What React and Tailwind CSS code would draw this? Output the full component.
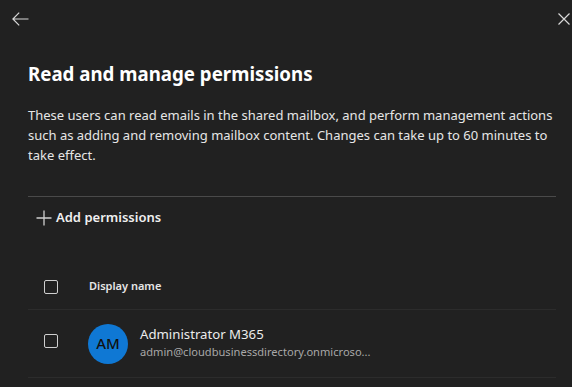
const FONT = { fontFamily: '"Noto Sans", "Open Sans", sans-serif' }

function BackArrow() {
  return (
    <svg width="17" height="14" viewBox="0 0 17 14" fill="none" stroke="currentColor" strokeWidth="1.2">
      <path d="M16.5 7H1M7.2 0.6L0.9 7l6.3 6.4" />
    </svg>
  )
}

function CloseX() {
  return (
    <svg width="12" height="12" viewBox="0 0 12 12" fill="none" stroke="currentColor" strokeWidth="1.2">
      <path d="M0.5 0.5l11 11M11.5 0.5l-11 11" />
    </svg>
  )
}

function PlusIcon() {
  return (
    <svg width="16" height="16" viewBox="0 0 16 16" fill="none" stroke="currentColor" strokeWidth="1.3">
      <path d="M8 0.5v15M0.5 8h15" />
    </svg>
  )
}

export default function App() {
  return (
    <div className="w-[572px] h-[387px] overflow-hidden bg-[#212121] text-white" style={FONT}>
      <div className="flex items-start justify-between h-[36px]">
        <button className="ml-[12px] mt-[12px] text-[#d8d8d8]">
          <BackArrow />
        </button>
        <button className="mr-[2px] mt-[13px] text-[#d8d8d8]">
          <CloseX />
        </button>
      </div>

      <div className="pl-[28px] pr-[16px]">
        <h1 className="mt-[25px] text-[18.7px] leading-[26px] font-bold text-white">Read and manage permissions</h1>
        <p className="mt-[18px] text-[13px] leading-[20px] text-[#e6e6e6]">
          These users can read emails in the shared mailbox, and perform management actions such as adding and removing mailbox content. Changes can take up to 60 minutes to take effect.
        </p>
        <div className="mt-[31px] h-px bg-[#4a4a4a]" />

        <button className="mt-[10px] flex items-center gap-[4px] pl-[8px] h-[22px] text-[13px] font-semibold text-[#f0f0f0]">
          <span className="text-[#cfcfcf]"><PlusIcon /></span>
          Add permissions
        </button>

        <div className="mt-[35px] flex items-center h-[45px]">
          <div className="ml-[16px] w-[14px] h-[14px] rounded-[2px] border border-[#cfcfcf]" />
          <span className="ml-[31px] text-[11px] font-semibold text-[#e6e6e6]">Display name</span>
        </div>
        <div className="h-px bg-[#2c2c2c]" />

        <div className="flex items-center h-[67px]">
          <div className="ml-[16px] mb-[6px] w-[14px] h-[14px] rounded-[2px] border border-[#cfcfcf]" />
          <div className="ml-[30px] w-[40px] h-[40px] rounded-full bg-[#0f78d4] flex items-center justify-center text-[15px] text-[#111] font-medium">
            AM
          </div>
          <div className="ml-[12px] mb-[2px] flex flex-col">
            <span className="text-[13.2px] leading-[19px] text-[#ececec]">Administrator M365</span>
            <span className="text-[11.1px] leading-[16px] text-[#a8a8a8]">admin@cloudbusinessdirectory.onmicroso...</span>
          </div>
        </div>
        <div className="h-px bg-[#2c2c2c]" />
      </div>
    </div>
  )
}
